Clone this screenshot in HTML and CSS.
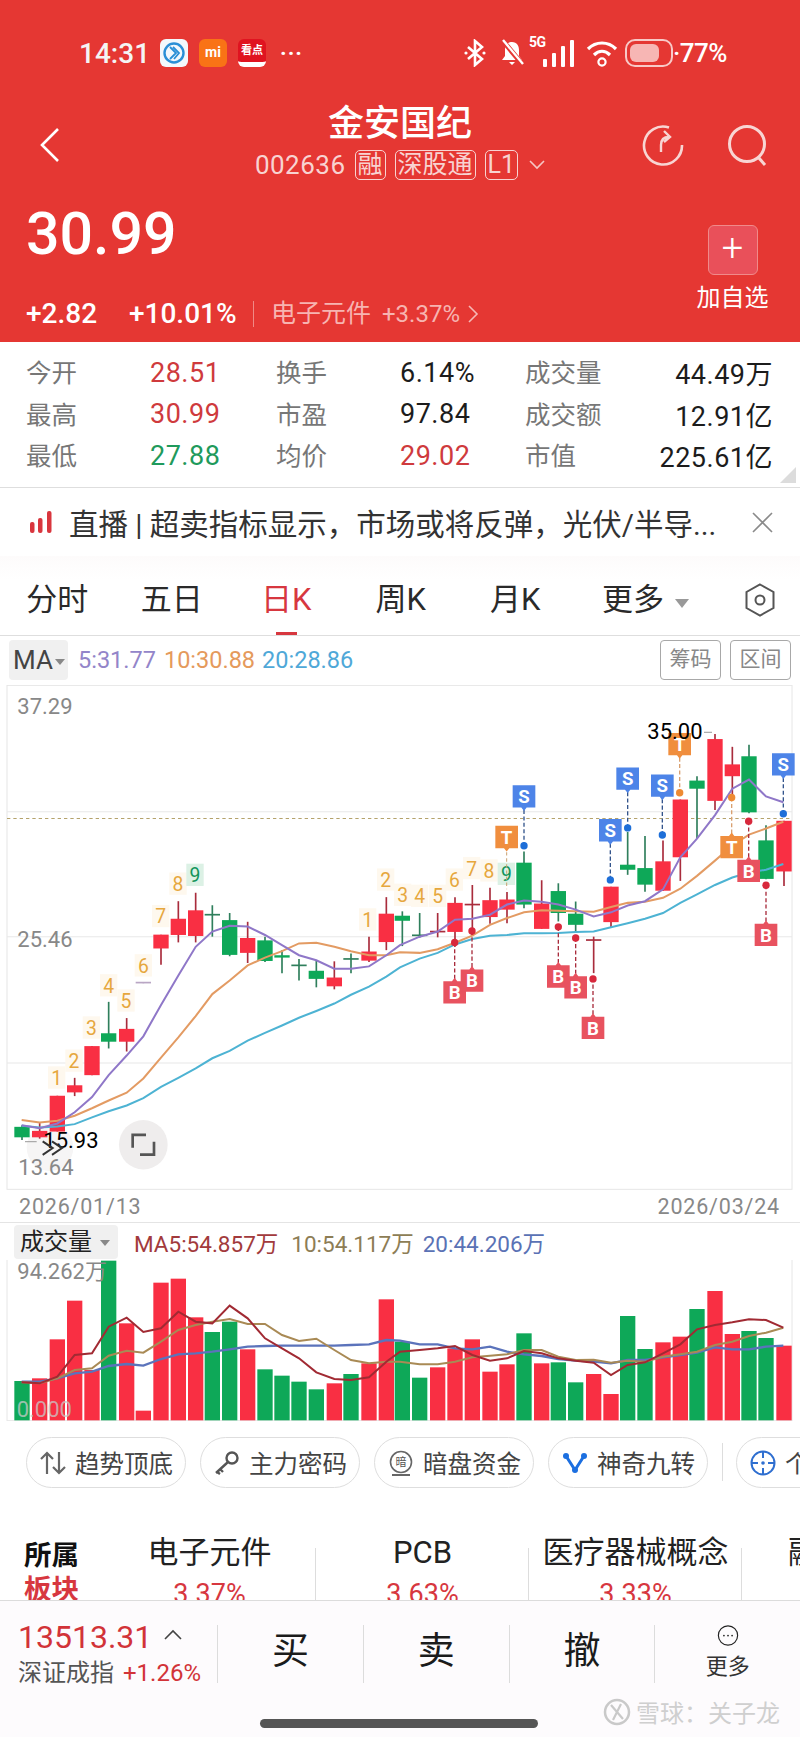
FILE: index.html
```html
<!DOCTYPE html>
<html lang="zh-CN">
<head>
<meta charset="UTF-8" />
<meta name="viewport" content="width=device-width, initial-scale=1" />
<title>金安国纪</title>
<link rel="stylesheet" href="styles.css">
</head>
<body>
<div id="page">

  <!-- red quote header -->
  <header class="head">
    <div class="status">
      <span class="time">14:31</span>
      <svg class="app" width="28" height="28" viewBox="0 0 28 28"><rect width="28" height="28" rx="6" fill="#f3f8fc"/><circle cx="14" cy="14" r="9.5" fill="none" stroke="#2a8fd6" stroke-width="2.4"/><path d="M10 8l6 6-6 6M13 8l6 6-5 6" fill="none" stroke="#2a8fd6" stroke-width="1.8"/></svg>
      <span class="app app-mi">mi</span>
      <span class="app app-kd">看点</span>
      <span class="dots">···</span>
      <span class="status-right">
        <svg width="22" height="28" viewBox="0 0 22 28"><path d="M4 8l14 12-7 6V2l7 6L4 20" fill="none" stroke="#fff" stroke-width="2.6"/><circle cx="2" cy="14" r="1.6" fill="#fff"/><circle cx="20" cy="14" r="1.6" fill="#fff"/></svg>
        <svg class="ic-bell" width="26" height="28" viewBox="0 0 26 28"><path d="M13 3c-5 0-7 4-7 8v6l-3 4h20l-3-4v-6c0-4-2-8-7-8zM10 23h6l-3 3z" fill="#fff"/><path d="M4 2l20 24" stroke="#e53733" stroke-width="5"/><path d="M4 1l20 24" stroke="#fff" stroke-width="2.4"/></svg>
        <span class="net"><b>5G</b><svg width="32" height="28" viewBox="0 0 32 28"><rect x="0" y="20" width="4" height="8" rx="1" fill="#fff"/><rect x="9" y="14" width="4" height="14" rx="1" fill="#fff"/><rect x="18" y="7" width="4" height="21" rx="1" fill="#fff"/><rect x="27" y="1" width="4" height="27" rx="1" fill="#fff"/></svg></span>
        <svg class="ic-wifi" width="32" height="28" viewBox="0 0 32 28"><path d="M2 10c8-8 20-8 28 0M8 16c5-5 11-5 16 0" fill="none" stroke="#fff" stroke-width="3.2"/><circle cx="16" cy="23" r="3.6" fill="none" stroke="#fff" stroke-width="2.2"/></svg>
        <span class="battery"><i></i></span>
        <span class="pct">·77%</span>
      </span>
    </div>

    <div class="nav">
      <svg class="ic-back" width="22" height="36" viewBox="0 0 22 36"><path d="M19 2L3 18l16 16" fill="none" stroke="#fff" stroke-width="2.6"/></svg>
      <div class="nav-mid">
        <h1>金安国纪</h1>
        <div class="code">
          <span>002636</span><em>融</em><em>深股通</em><em>L1</em>
          <svg width="16" height="10" viewBox="0 0 16 10"><path d="M1 1l7 7 7-7" fill="none" stroke="#f6c6c4" stroke-width="1.6"/></svg>
        </div>
      </div>
      <div class="nav-right">
        <svg width="42" height="42" viewBox="0 0 42 42"><path d="M27 3.5A19 19 0 1 0 40 21" fill="none" stroke="#f8d5d3" stroke-width="2.6"/><path d="M19 28v-7c0-5 3-8 8-8M22 7l6 6-6 5" fill="none" stroke="#f8d5d3" stroke-width="2.4"/></svg>
        <svg width="42" height="44" viewBox="0 0 42 44"><circle cx="20" cy="20" r="17.5" fill="none" stroke="#f8d5d3" stroke-width="3"/><path d="M31 33l7 8" stroke="#f8d5d3" stroke-width="3"/></svg>
      </div>
    </div>

    <div class="quote">
      <div>
        <div class="price">30.99</div>
        <div class="change">
          <span class="chg-a">+2.82</span><span class="chg-b">+10.01%</span>
          <span class="chg-sector">电子元件</span><span class="chg-pct">+3.37%</span>
          <svg width="11" height="18" viewBox="0 0 11 18"><path d="M1 1l8 8-8 8" fill="none" stroke="#f6b8b5" stroke-width="1.6"/></svg>
        </div>
      </div>
      <div class="add">
        <span class="add-btn">+</span>
        <span class="add-label">加自选</span>
      </div>
    </div>
  </header>

  <!-- stats table -->
  <section class="stats">
    <span class="lb">今开</span><span class="up">28.51</span>
    <span class="lb">换手</span><span>6.14%</span>
    <span class="lb">成交量</span><span class="end">44.49万</span>
    <span class="lb">最高</span><span class="up">30.99</span>
    <span class="lb">市盈</span><span>97.84</span>
    <span class="lb">成交额</span><span class="end">12.91亿</span>
    <span class="lb">最低</span><span class="down">27.88</span>
    <span class="lb">均价</span><span class="up">29.02</span>
    <span class="lb">市值</span><span class="end">225.61亿</span>
    <i class="corner"></i>
  </section>

  <section class="notice">
    <svg width="22" height="22" viewBox="0 0 22 22"><rect x="0" y="11" width="4.5" height="11" rx="2" fill="#d9363e"/><rect x="8" y="7" width="4.5" height="15" rx="2" fill="#d9363e"/><rect x="17" y="0" width="4.5" height="22" rx="2" fill="#d9363e"/></svg>
    <span class="notice-text">直播 | 超卖指标显示，市场或将反弹，光伏/半导...</span>
    <svg class="ic-x" width="21" height="21" viewBox="0 0 21 21"><path d="M1 1l19 19M20 1L1 20" stroke="#8a8a8a" stroke-width="1.6"/></svg>
  </section>

  <nav class="tabs">
    <span class="tab">分时</span>
    <span class="tab">五日</span>
    <span class="tab on">日K</span>
    <span class="tab">周K</span>
    <span class="tab">月K</span>
    <span class="tab tab-more">更多<i class="tri"></i></span>
    <svg class="ic-hex" width="30" height="34" viewBox="0 0 30 34"><path d="M15 1.5L28.5 9v16L15 32.500 1.500 25V9z" fill="none" stroke="#555" stroke-width="2"/><circle cx="15" cy="17" r="4.500" fill="none" stroke="#555" stroke-width="2"/></svg>
  </nav>

  <div class="ma-row">
    <span class="picker">MA<i class="tri small"></i></span>
    <span class="m5">5:31.77</span><span class="m10">10:30.88</span><span class="m20">20:28.86</span>
    <span class="btns"><span class="box">筹码</span><span class="box">区间</span></span>
  </div>

  <svg id="kline" class="chart" width="800" height="505" viewBox="0 15 2400 1495" preserveAspectRatio="none"></svg>

  <div class="dates"><span>2026/01/13</span><span>2026/03/24</span></div>

  <div class="vol-head">
    <span class="picker vol-picker">成交量<i class="tri small"></i></span>
    <span class="v5">MA5:54.857万</span><span class="v10">10:54.117万</span><span class="v20">20:44.206万</span>
  </div>
  <svg id="vol" class="chart vol-chart" width="800" height="161" viewBox="0 150 2400 483" preserveAspectRatio="none"></svg>

  <div class="chips">
    <span class="chip">
      <svg width="26" height="24" viewBox="0 0 26 24"><path d="M7 23V2M1 8l6-6 6 6M19 1v21M13 16l6 6 6-6" fill="none" stroke="#666" stroke-width="2.200"/></svg>趋势顶底
    </span>
    <span class="chip">
      <svg width="26" height="24" viewBox="0 0 26 24"><circle cx="18" cy="7" r="5.500" fill="none" stroke="#555" stroke-width="2.400"/><path d="M14 11L2 22M6 18l3 3M3 21l3 2" fill="none" stroke="#555" stroke-width="2.400"/></svg>主力密码
    </span>
    <span class="chip">
      <svg width="26" height="26" viewBox="0 0 26 26"><circle cx="13" cy="12" r="10.500" fill="none" stroke="#666" stroke-width="1.600"/><path d="M4 25h18" stroke="#666" stroke-width="2"/><text x="13" y="16" class="an">暗</text></svg>暗盘资金
    </span>
    <span class="chip">
      <svg width="26" height="24" viewBox="0 0 26 24"><path d="M4 5l9 14 9-14" fill="none" stroke="#1c6fe0" stroke-width="3"/><circle cx="4" cy="5" r="3" fill="#1c6fe0"/><circle cx="22" cy="5" r="3" fill="#1c6fe0"/><circle cx="13" cy="19" r="3" fill="#1c6fe0"/></svg>神奇九转
    </span>
    <i class="chip-sep"></i>
    <span class="chip">
      <svg width="26" height="26" viewBox="0 0 26 26"><circle cx="13" cy="13" r="11.500" fill="none" stroke="#2f6fd0" stroke-width="2"/><path d="M13 1v7M13 18v7M1 13h7M18 13h7" stroke="#2f6fd0" stroke-width="2"/><circle cx="13" cy="13" r="1.800" fill="#2f6fd0"/></svg>个股雷达
    </span>
  </div>

  <section class="sector">
    <div class="sector-title"><b>所属</b><b class="red">板块</b></div>
    <div class="sector-item"><span>电子元件</span><em>3.37%</em></div>
    <div class="sector-item"><span>PCB</span><em>3.63%</em></div>
    <div class="sector-item"><span>医疗器械概念</span><em>3.33%</em></div>
    <div class="sector-item last"><span>融资融券</span></div>
  </section>

  <footer class="foot">
    <div class="foot-row">
      <div class="index">
        <div class="idx-top">13513.31<svg width="18" height="11" viewBox="0 0 18 11"><path d="M1 10l8-8 8 8" fill="none" stroke="#444" stroke-width="1.600"/></svg></div>
        <div class="idx-sub">深证成指<span>+1.26%</span></div>
      </div>
      <div class="act">买</div>
      <div class="act">卖</div>
      <div class="act">撤</div>
      <div class="act more">
        <svg width="36" height="36" viewBox="0 0 36 36"><circle cx="18" cy="18" r="16.500" fill="none" stroke="#222" stroke-width="2"/><circle cx="11" cy="18" r="1.500" fill="#222"/><circle cx="18" cy="18" r="1.500" fill="#222"/><circle cx="25" cy="18" r="1.500" fill="#222"/></svg>
        <span>更多</span>
      </div>
    </div>
    <div class="home"></div>
    <!-- watermark sits over the footer -->
    <div class="mark">
      <svg width="28" height="28" viewBox="0 0 28 28"><circle cx="14" cy="14" r="12" fill="none" stroke="#c9c9c9" stroke-width="2.500"/><path d="M8 7l12 14M18 6L10 22" stroke="#c9c9c9" stroke-width="2.200"/></svg>
      <span>雪球：关子龙</span>
    </div>
  </footer>
</div>
<script src="chart.js"></script>
</body>
</html>
```

FILE: styles.css
```css
* {
  box-sizing: border-box;
}
html, body {
  margin: 0;
  background: #fff;
}
#page {
  width: 800px;
  height: 1737px;
  overflow: hidden;
  position: relative;
  font-family: Roboto, "Noto Sans CJK SC", sans-serif;
  color: #222;
}

/* header */
.head {
  height: 342px;
  background: #e53733;
  color: #fff;
}
.status {
  height: 100px;
  padding: 6px 0 0 79px;
  display: flex;
  align-items: center;
}
.time {
  font-size: 28px;
  font-weight: 500;
  width: 81px;
  color: #f4f4f4;
}
.app {
  width: 28px;
  height: 28px;
  margin-right: 11px;
  flex: none;
}
.app-mi {
  background: #f97316;
  border-radius: 6px;
  color: #fff;
  font-size: 14px;
  font-weight: 700;
  text-align: center;
  line-height: 26px;
}
.app-kd {
  background: #e01320;
  border-radius: 6px;
  border-bottom: 5px solid #fff;
  font-size: 11px;
  font-weight: 700;
  text-align: center;
  line-height: 24px;
  white-space: nowrap;
}
.dots {
  font-size: 22px;
  font-weight: 700;
  letter-spacing: 1px;
  margin-left: 3px;
}
.status-right {
  margin-left: 161px;
  display: flex;
  align-items: center;
}
.ic-bell {
  margin-left: 13px;
}
.net {
  position: relative;
  margin-left: 4px;
  padding-left: 14px;
  display: flex;
}
.net b {
  position: absolute;
  left: 0;
  top: -5px;
  font-size: 14px;
  letter-spacing: -0.5px;
}
.ic-wifi {
  margin-left: 11px;
}
.battery {
  width: 48px;
  height: 28px;
  border: 2px solid #f8c9c7;
  border-radius: 10px;
  padding: 3px;
  margin-left: 7px;
  display: block;
}
.battery i {
  display: block;
  width: 76%;
  height: 100%;
  background: #f7b6b4;
  border-radius: 6px;
}
.pct {
  font-size: 26px;
  font-weight: 500;
  letter-spacing: -0.5px;
}

.nav {
  height: 86px;
  display: grid;
  grid-template-columns: 200px 400px 200px;
  align-items: center;
}
.ic-back {
  margin: 4px 0 0 39px;
}
.nav-mid {
  text-align: center;
}
.nav-mid h1 {
  margin: 2px 0 -2px;
  font-size: 36px;
  line-height: 44px;
  font-weight: 500;
}
.code {
  height: 42px;
  display: flex;
  align-items: center;
  justify-content: center;
  color: #f8d3d1;
  font-size: 26px;
  letter-spacing: 0.5px;
}
.code em {
  font-style: normal;
  font-size: 25px;
  line-height: 28px;
  padding: 0 2px;
  border: 1.5px solid #f8d3d1;
  border-radius: 5px;
  margin-left: 9px;
  letter-spacing: 0;
}
.code svg {
  margin-left: 11px;
}
.nav-right {
  display: flex;
  justify-content: flex-end;
  padding: 6px 31px 0 0;
  gap: 43px;
}

.quote {
  display: flex;
  justify-content: space-between;
  padding: 12px 31px 0 26px;
}
.price {
  font-size: 59px;
  line-height: 72px;
  font-weight: 500;
}
.change {
  margin-top: 26px;
  display: flex;
  align-items: center;
  font-size: 28px;
  line-height: 36px;
  font-weight: 500;
}
.chg-a {
  width: 103px;
}
.chg-b {
  width: 125px;
  padding-right: 4px;
  margin-right: 17px;
  border-right: 1px solid #f08a86;
  line-height: 26px;
  white-space: nowrap;
}
.chg-sector {
  color: #f7b4b1;
  font-size: 25px;
  font-weight: 400;
  width: 111px;
}
.chg-pct {
  color: #f7b4b1;
  font-size: 24px;
  font-weight: 400;
  margin-right: 8px;
}
.add {
  display: flex;
  flex-direction: column;
  align-items: center;
  padding-top: 27px;
}
.add-btn {
  width: 50px;
  height: 50px;
  background: #e9505a;
  border: 1.5px solid #f08a8a;
  border-radius: 6px;
  text-align: center;
  font-size: 38px;
  line-height: 44px;
  font-weight: 300;
}
.add-label {
  margin-top: 6px;
  font-size: 24px;
  line-height: 34px;
  white-space: nowrap;
  width: 73px;
  text-align: center;
}

/* stats */
.stats {
  position: relative;
  height: 146px;
  padding: 10px 27px 0 26px;
  display: grid;
  grid-template-columns: 124px 126px 124px 125px 124px 124px;
  grid-auto-rows: 41.500px;
  align-items: center;
  border-bottom: 1px solid #dedede;
  font-size: 27px;
  letter-spacing: 0.500px;
  color: #1c1c1c;
}
.lb {
  color: #777;
  font-size: 25.500px;
  letter-spacing: 0;
  margin-bottom: 4px;
}
.up {
  color: #cf3a3d;
}
.down {
  color: #1f9a5c;
}
.end {
  text-align: right;
}
.corner {
  position: absolute;
  right: 4px;
  bottom: 4px;
  border-left: 16px solid transparent;
  border-bottom: 16px solid #dcdcdc;
}

.notice {
  height: 68px;
  padding: 0 27px 0 30px;
  display: flex;
  align-items: center;
  font-size: 29.500px;
  color: #333;
}
.notice-text {
  margin-left: 17px;
  white-space: nowrap;
  flex: 1;
}

/* tabs */
.tabs {
  height: 80px;
  padding-top: 26px;
  display: flex;
  border-bottom: 1px solid #dedede;
  font-size: 31px;
  color: #2a2a2a;
  background: linear-gradient(#fdfbfb, #fff 30%);
}
.tab {
  position: relative;
  width: 114.500px;
  height: 53px;
  line-height: 36px;
  text-align: center;
  flex: none;
}
.tab.on {
  color: #d7373f;
}
.tab.on::after {
  content: "";
  position: absolute;
  left: 47px;
  bottom: 0;
  width: 21px;
  height: 3px;
  background: #d7373f;
}
.tab-more {
  padding-left: 28px;
  white-space: nowrap;
  width: 118px;
}
.tri {
  display: inline-block;
  margin-left: 11px;
  vertical-align: 2px;
  border-left: 7px solid transparent;
  border-right: 7px solid transparent;
  border-top: 9px solid #999;
}
.tri.small {
  margin-left: 2px;
  vertical-align: 4px;
  border-left-width: 5px;
  border-right-width: 5px;
  border-top: 6px solid #888;
}
.ic-hex {
  margin: 1px 0 0 54px;
  flex: none;
}

.ma-row {
  height: 49px;
  padding: 4px 9px 5px;
  display: flex;
  align-items: center;
  font-size: 23.500px;
}
.picker {
  background: #f0f0f0;
  border-radius: 4px;
  height: 40px;
  padding: 0 5px 0 4px;
  line-height: 40px;
  font-size: 26px;
  color: #444;
  margin-right: 10px;
  white-space: nowrap;
  width: 59px;
}
.m5 { color: #9385c9; margin-right: 8px; }
.m10 { color: #e59a5c; margin-right: 7px; }
.m20 { color: #4fa8d8; }
.btns {
  margin-left: auto;
  display: flex;
  gap: 9px;
}
.box {
  width: 61px;
  height: 40px;
  border: 1.500px solid #a8a8a8;
  border-radius: 4px;
  text-align: center;
  line-height: 37px;
  font-size: 21px;
  color: #888;
}

.chart {
  display: block;
}
.dates {
  height: 32px;
  padding: 0 20px 0 19px;
  display: flex;
  justify-content: space-between;
  align-items: center;
  font-size: 21.500px;
  color: #888;
  letter-spacing: 0.800px;
}

.vol-head {
  height: 38px;
  padding: 0 0 0 14px;
  display: flex;
  align-items: center;
  font-size: 22.500px;
  border-top: 1px solid #e4e4e4;
  white-space: nowrap;
}
.vol-picker {
  height: 34px;
  line-height: 34px;
  font-size: 24px;
  padding: 0 7px 0 6px;
  margin-right: 16px;
  color: #222;
  width: 104px;
  flex: none;
}
.vol-picker .tri {
  margin-left: 8px;
}
.v5 { color: #a23a3c; margin-right: 13px; }
.v10 { color: #8d7d55; margin-right: 9px; }
.v20 { color: #5a72b5; }

/* chips */
.chips {
  padding: 16px 0 0 26px;
  height: 109px;
  display: flex;
  gap: 14px;
  overflow: hidden;
}
.chip {
  width: 160px;
  height: 51px;
  flex: none;
  border: 1.500px solid #dedede;
  border-radius: 26px;
  display: flex;
  align-items: center;
  padding-left: 13px;
  gap: 9px;
  font-size: 24.500px;
  color: #444;
  white-space: nowrap;
  overflow: hidden;
}
.chip-sep {
  width: 1px;
  height: 38px;
  margin: 6px -1px 0 0;
  background: #ddd;
  flex: none;
}
.an {
  font-size: 11px;
  text-anchor: middle;
  fill: #555;
}

.sector {
  height: 70px;
  overflow: hidden;
  display: flex;
  text-align: center;
  font-size: 31px;
}
.sector-title {
  width: 103px;
  flex: none;
  padding: 9px 0 0 24px;
  font-size: 27.500px;
  line-height: 34px;
  text-align: left;
}
.sector-title b {
  display: block;
  font-weight: 700;
  color: #111;
  white-space: nowrap;
}
.sector-title .red {
  color: #d7373f;
}
.sector-item {
  width: 213px;
  flex: none;
  padding-top: 1px;
  background: linear-gradient(#ddd, #ddd) right 18px / 1px 100% no-repeat;
  white-space: nowrap;
}
.sector-item span {
  display: block;
  line-height: 44px;
}
.sector-item em {
  display: block;
  font-style: normal;
  color: #d7373f;
  font-size: 27px;
  line-height: 38px;
}
.sector-item.last {
  text-align: left;
  padding-left: 46px;
  background: none;
}

/* footer */
.foot {
  position: relative;
  height: 137px;
  background: #fdfbfd;
  border-top: 1px solid #dcdcdc;
}
.foot-row {
  margin-top: 24px;
  height: 58px;
  display: flex;
}
.index {
  width: 218px;
  padding-left: 18px;
}
.idx-top {
  margin-top: -6px;
  font-size: 32px;
  line-height: 36px;
  color: #d23338;
  white-space: nowrap;
}
.idx-top svg {
  margin-left: 12px;
  vertical-align: 8px;
}
.idx-sub {
  margin-top: 2px;
  font-size: 24px;
  line-height: 32px;
  color: #555;
  white-space: nowrap;
}
.idx-sub span {
  margin-left: 9px;
  color: #d23338;
}
.act {
  width: 146.300px;
  border-left: 1px solid #dcdcdc;
  display: flex;
  align-items: center;
  justify-content: center;
  font-size: 37px;
  line-height: 50px;
  padding-bottom: 5px;
  color: #1b1b1b;
}
.act.more {
  flex-direction: column;
  font-size: 22px;
  justify-content: flex-start;
  color: #333;
  padding-bottom: 0;
}
.act.more span {
  margin-top: 5px;
  line-height: 32px;
}
.home {
  width: 278px;
  height: 9px;
  margin: 36px 0 0 260px;
  background: #555;
  border-radius: 5px;
}
.mark {
  position: absolute;
  left: 603px;
  top: 93px;
  display: flex;
  align-items: center;
  gap: 5px;
  font-size: 24px;
  color: #cfcfcf;
  white-space: nowrap;
}
```

FILE: chart.js
```js
// coordinates below are in a 2400 wide space, 3 units per page pixel
var RED = "#f92f43", GREEN = "#0ea858";
var BLUE_TAG = "#4d84e8", ORANGE_TAG = "#f08e3e", PINK_TAG = "#e8525f";

// x, top, bottom, wick top, wick bottom, color
var candles = [
  [66,1323,1354,1318,1362,"g"],[119,1335,1354,1312,1358,"r"],[172,1231,1337,1231,1337,"r"],
  [224,1200,1221,1178,1232,"r"],[276,1084,1170,1084,1170,"r"],[326,1046,1071,953,1091,"g"],
  [380,1033,1071,1001,1100,"r"],[430,896,898,896,898,"p"],[483,754,795,754,843,"r"],
  [535,707,755,655,777,"r"],[587,682,758,630,777,"r"],[637,695,697,667,760,"g"],
  [689,711,814,690,818,"g"],[743,764,808,716,838,"r"],[795,771,832,760,835,"g"],
  [846,815,822,800,868,"g"],[897,845,847,826,890,"g"],[949,861,885,832,910,"g"],
  [1003,881,907,833,916,"r"],[1053,826,828,810,868,"g"],[1107,804,831,760,835,"r"],
  [1159,692,776,643,800,"r"],[1207,698,713,685,788,"g"],[1259,756,757,690,763,"g"],
  [1313,745,746,690,762,"r"],[1365,660,746,643,790,"r"],[1417,665,666,607,757,"r"],
  [1470,652,702,615,722,"r"],[1521,650,680,628,720,"r"],[1572,541,665,508,676,"g"],
  [1625,662,737,593,737,"r"],[1675,625,690,602,715,"g"],[1727,692,725,656,745,"g"],
  [1781,770,772,760,868,"r"],[1833,612,717,612,733,"r"],[1883,547,562,450,577,"g"],
  [1935,557,606,462,627,"g"],[1989,537,624,475,625,"r"],[2041,354,525,354,595,"r"],
  [2091,298,322,285,470,"g"],[2145,175,358,160,385,"r"],[2197,250,285,198,340,"r"],
  [2247,226,392,192,395,"g"],[2298,475,589,430,590,"g"],[2352,417,567,417,610,"r"]
];

var volTops = [513,505,388,272,480,152,340,602,218,206,322,366,335,418,478,497,515,538,520,492,460,268,
  395,503,472,415,388,485,463,370,460,457,517,492,552,318,417,397,380,297,243,372,363,384,407];

var ma5 = "65,1318 119,1327 172,1313 224,1280 276,1235 326,1170 380,1112 430,1055 483,962 535,875 587,790 637,745 689,728 743,730 795,755 846,785 897,815 949,830 1003,855 1053,855 1107,848 1159,815 1200,785 1259,760 1313,745 1365,710 1417,707 1470,695 1521,665 1572,653 1625,657 1675,665 1727,680 1781,700 1833,688 1883,668 1935,655 1989,620 2041,525 2091,470 2145,400 2197,322 2247,295 2298,345 2350,362";
var ma10 = "65,1303 119,1310 172,1305 224,1290 276,1268 326,1245 380,1222 430,1180 483,1118 535,1058 587,995 637,930 689,890 743,845 795,822 846,803 897,780 949,778 1003,790 1053,803 1107,815 1159,815 1200,806 1259,808 1313,797 1365,778 1417,757 1470,725 1521,705 1572,688 1625,682 1675,683 1727,685 1781,686 1833,672 1883,660 1935,657 1989,645 2041,618 2091,580 2145,535 2197,490 2247,458 2298,440 2350,420";
var ma20 = "65,1320 119,1325 172,1322 224,1315 276,1295 326,1277 380,1260 430,1238 483,1205 535,1178 587,1150 637,1120 689,1098 743,1068 795,1045 846,1023 897,1000 949,980 1003,958 1053,932 1107,908 1159,878 1200,851 1259,825 1313,808 1365,783 1417,767 1470,757 1521,755 1572,750 1625,750 1675,749 1727,746 1781,745 1833,732 1883,720 1935,707 1989,690 2041,660 2091,635 2145,607 2197,585 2247,570 2298,562 2350,545";

var v5 = "65,517 119,520 172,500 224,435 276,430 326,350 380,323 430,366 483,355 535,305 587,335 637,340 689,287 743,325 795,385 846,415 897,445 949,487 1003,507 1053,510 1107,502 1159,455 1200,425 1259,420 1313,415 1365,408 1417,435 1470,452 1521,445 1572,423 1625,430 1675,445 1727,452 1781,458 1833,495 1883,465 1935,457 1989,430 2041,403 2091,358 2145,345 2197,337 2247,328 2298,330 2350,353";
var v10 = "65,517 119,520 172,505 224,480 276,475 326,437 380,422 430,428 483,395 535,360 587,345 637,335 689,327 743,342 795,342 846,375 897,393 949,386 1003,420 1053,450 1107,460 1159,455 1200,455 1259,463 1313,463 1365,455 1417,442 1470,437 1521,433 1572,420 1625,420 1675,440 1727,450 1781,449 1833,458 1883,452 1935,455 1989,440 2041,433 2091,425 2145,405 2197,395 2247,378 2298,368 2350,353";
var v20 = "65,515 119,515 172,505 224,490 276,485 326,468 380,462 430,467 483,447 535,433 587,430 637,425 689,418 743,410 795,408 846,407 897,407 949,407 1003,407 1053,405 1107,403 1159,390 1200,392 1259,403 1313,403 1365,415 1417,418 1470,410 1521,425 1572,433 1625,438 1675,447 1727,452 1781,455 1833,460 1883,450 1935,450 1989,442 2041,435 2091,428 2145,412 2197,418 2247,418 2298,410 2350,407";

function color(c) {
  return c == "r" ? RED : c == "g" ? GREEN : "#b9a6c4";
}

function wick(c) {
  return c == "r" ? "#a92c3c" : c == "g" ? "#2f7f5c" : "#b9a6c4";
}

function line(pts, stroke, w) {
  return '<polyline points="' + pts + '" fill="none" stroke="' + stroke + '" stroke-width="' + w + '"/>';
}

function text(x, y, s, cls, fill) {
  return '<text x="' + x + '" y="' + y + '" class="' + cls + '" font-family="Roboto, sans-serif" fill="' + fill + '">' + s + '</text>';
}

// sequence number above a candle, with its pale square
function seq(x, y, s, green) {
  var bg = green ? "#dcf1e5" : "#fef8ee";
  return '<rect x="' + (x - 26) + '" y="' + (y - 34) + '" width="52" height="66" fill="' + bg + '"/>' +
    '<text x="' + x + '" y="' + (y + 21) + '" text-anchor="middle" font-size="58" font-family="Roboto, sans-serif" fill="' + (green ? "#12945a" : "#e6a73d") + '">' + s + '</text>';
}

function dotColor(fill) {
  if (fill == BLUE_TAG) return "#1e6fd8";
  if (fill == PINK_TAG) return "#d8283c";
  return "#ee8a32";
}

function dashColor(fill) {
  if (fill == BLUE_TAG) return "#34558c";
  if (fill == PINK_TAG) return "#a92c3c";
  return "#d9a070";
}

// flag tag: dir 1 points down, -1 points up
function tag(x, y, s, fill, dir, dotY) {
  var out = "";
  if (dotY != null) {
    out += '<line x1="' + x + '" x2="' + x + '" y1="' + (y + dir * 40) + '" y2="' + dotY + '" stroke="' + dashColor(fill) + '" stroke-width="4" stroke-dasharray="12 7"/>';
    out += '<circle cx="' + x + '" cy="' + dotY + '" r="11" fill="' + dotColor(fill) + '"/>';
  }
  out += '<path d="M' + (x - 34) + ' ' + (y - dir * 33) + 'H' + (x + 34) + 'V' + (y + dir * 33) + 'H' + (x + 8) + 'L' + x + ' ' + (y + dir * 43) + 'L' + (x - 8) + ' ' + (y + dir * 33) + 'H' + (x - 34) + 'Z" fill="' + fill + '"/>';
  out += '<text x="' + x + '" y="' + (y + 20) + '" text-anchor="middle" font-size="56" font-weight="700" font-family="Roboto, sans-serif" fill="#fff">' + s + '</text>';
  return out;
}

function drawKline() {
  var s = "";
  // frame and grid
  s += '<rect x="21" y="16" width="2355" height="1492" fill="none" stroke="#e6e6e6" stroke-width="3"/>';
  [390, 760, 1134].forEach(function (y) {
    s += '<line x1="21" x2="2376" y1="' + y + '" y2="' + y + '" stroke="#e8e8e8" stroke-width="3"/>';
  });
  s += '<line x1="21" x2="2376" y1="410" y2="410" stroke="#b5a36c" stroke-width="3" stroke-dasharray="10 9"/>';

  // round overlay buttons
  s += '<circle cx="150" cy="1384" r="70" fill="#f6f5f5"/>';
  s += '<circle cx="430" cy="1376" r="73" fill="#efeded"/>';
  s += '<path d="M398 1385V1347H438M462 1367V1405H420" fill="none" stroke="#555" stroke-width="8"/>';

  s += text(52, 100, "37.29", "lbl", "#888");
  s += text(52, 790, "25.46", "lbl", "#888");
  s += text(55, 1465, "13.64", "lbl", "#888");

  candles.forEach(function (c) {
    var col = color(c[5]);
    s += '<line x1="' + c[0] + '" x2="' + c[0] + '" y1="' + c[3] + '" y2="' + c[4] + '" stroke="' + wick(c[5]) + '" stroke-width="5"/>';
    if (c[2] - c[1] <= 3) {
      s += '<line x1="' + (c[0] - 23) + '" x2="' + (c[0] + 23) + '" y1="' + c[1] + '" y2="' + c[1] + '" stroke="' + wick(c[5]) + '" stroke-width="5"/>';
    } else {
      s += '<rect x="' + (c[0] - 23) + '" y="' + c[1] + '" width="46" height="' + (c[2] - c[1]) + '" fill="' + col + '"/>';
    }
  });

  s += line(ma20, "#4db3d3", 6);
  s += line(ma10, "#e39b63", 6);
  s += line(ma5, "#8f77c8", 6);

  [[170,1178,1],[222,1128,2],[274,1030,3],[326,905,4],[378,950,5],[430,846,6],[482,700,7],[534,604,8],
   [1103,710,1],[1157,592,2],[1208,637,3],[1259,640,4],[1313,640,5],[1363,592,6],[1415,558,7],[1467,565,8]
  ].forEach(function (a) { s += seq(a[0], a[1], a[2]); });
  s += seq(585, 578, 9, true);
  s += seq(1519, 575, 9, true);

  [[1572,345,491],[1831,445,592],[1883,292,438],[1987,313,459],[2350,250,396]].forEach(function (a) {
    s += tag(a[0], a[1], "S", BLUE_TAG, 1, a[2]);
  });
  s += tag(1520, 465, "T", ORANGE_TAG, 1, null);
  s += '<line x1="1520" x2="1520" y1="510" y2="620" stroke="#c9a070" stroke-width="3" stroke-dasharray="10 8"/>';
  s += tag(2039, 190, "T", ORANGE_TAG, 1, 334);
  s += tag(2195, 495, "T", ORANGE_TAG, -1, 348);
  [[1364,925,777],[1416,890,743],[1675,878,731],[1727,910,764],[1779,1030,885],[2246,565,418],[2298,755,608]].forEach(function (a) {
    s += tag(a[0], a[1], "B", PINK_TAG, -1, a[2]);
  });

  // extreme price labels, black, drawn above everything
  s += text(1942, 174, "35.00", "lbl", "#000");
  s += '<line x1="2112" x2="2136" y1="155" y2="155" stroke="#999" stroke-width="3"/>';
  s += text(130, 1387, "15.93", "lbl", "#000");
  s += '<line x1="75" x2="110" y1="1367" y2="1367" stroke="#999" stroke-width="3"/>';
  s += '<path d="M128 1366l30 20-30 20M156 1366l30 20-30 20" fill="none" stroke="#333" stroke-width="6"/>';

  document.getElementById("kline").innerHTML = s;
}

function drawVol() {
  var s = "";
  s += '<line x1="21" x2="21" y1="150" y2="633" stroke="#e6e6e6" stroke-width="3"/>';
  s += '<line x1="2376" x2="2376" y1="150" y2="633" stroke="#e6e6e6" stroke-width="3"/>';
  s += '<line x1="21" x2="2376" y1="632" y2="632" stroke="#e6e6e6" stroke-width="3"/>';
  candles.forEach(function (c, i) {
    var col = color(c[5]);
    if (c[5] == "p") col = RED;
    s += '<rect x="' + (c[0] - 23) + '" y="' + volTops[i] + '" width="46" height="' + (631 - volTops[i]) + '" fill="' + col + '"/>';
  });
  s += line(v20, "#5b73bb", 7);
  s += line(v10, "#a98a55", 6);
  s += line(v5, "#a12a33", 6);
  s += text(52, 206, "94.262万", "lbl", "#888");
  s += text(50, 622, "0.000", "lbl", "rgba(200,200,200,.75)");
  document.getElementById("vol").innerHTML = s;
}

drawKline();
drawVol();
document.querySelectorAll(".lbl").forEach(function (t) {
  t.setAttribute("font-size", "66");
});
```
